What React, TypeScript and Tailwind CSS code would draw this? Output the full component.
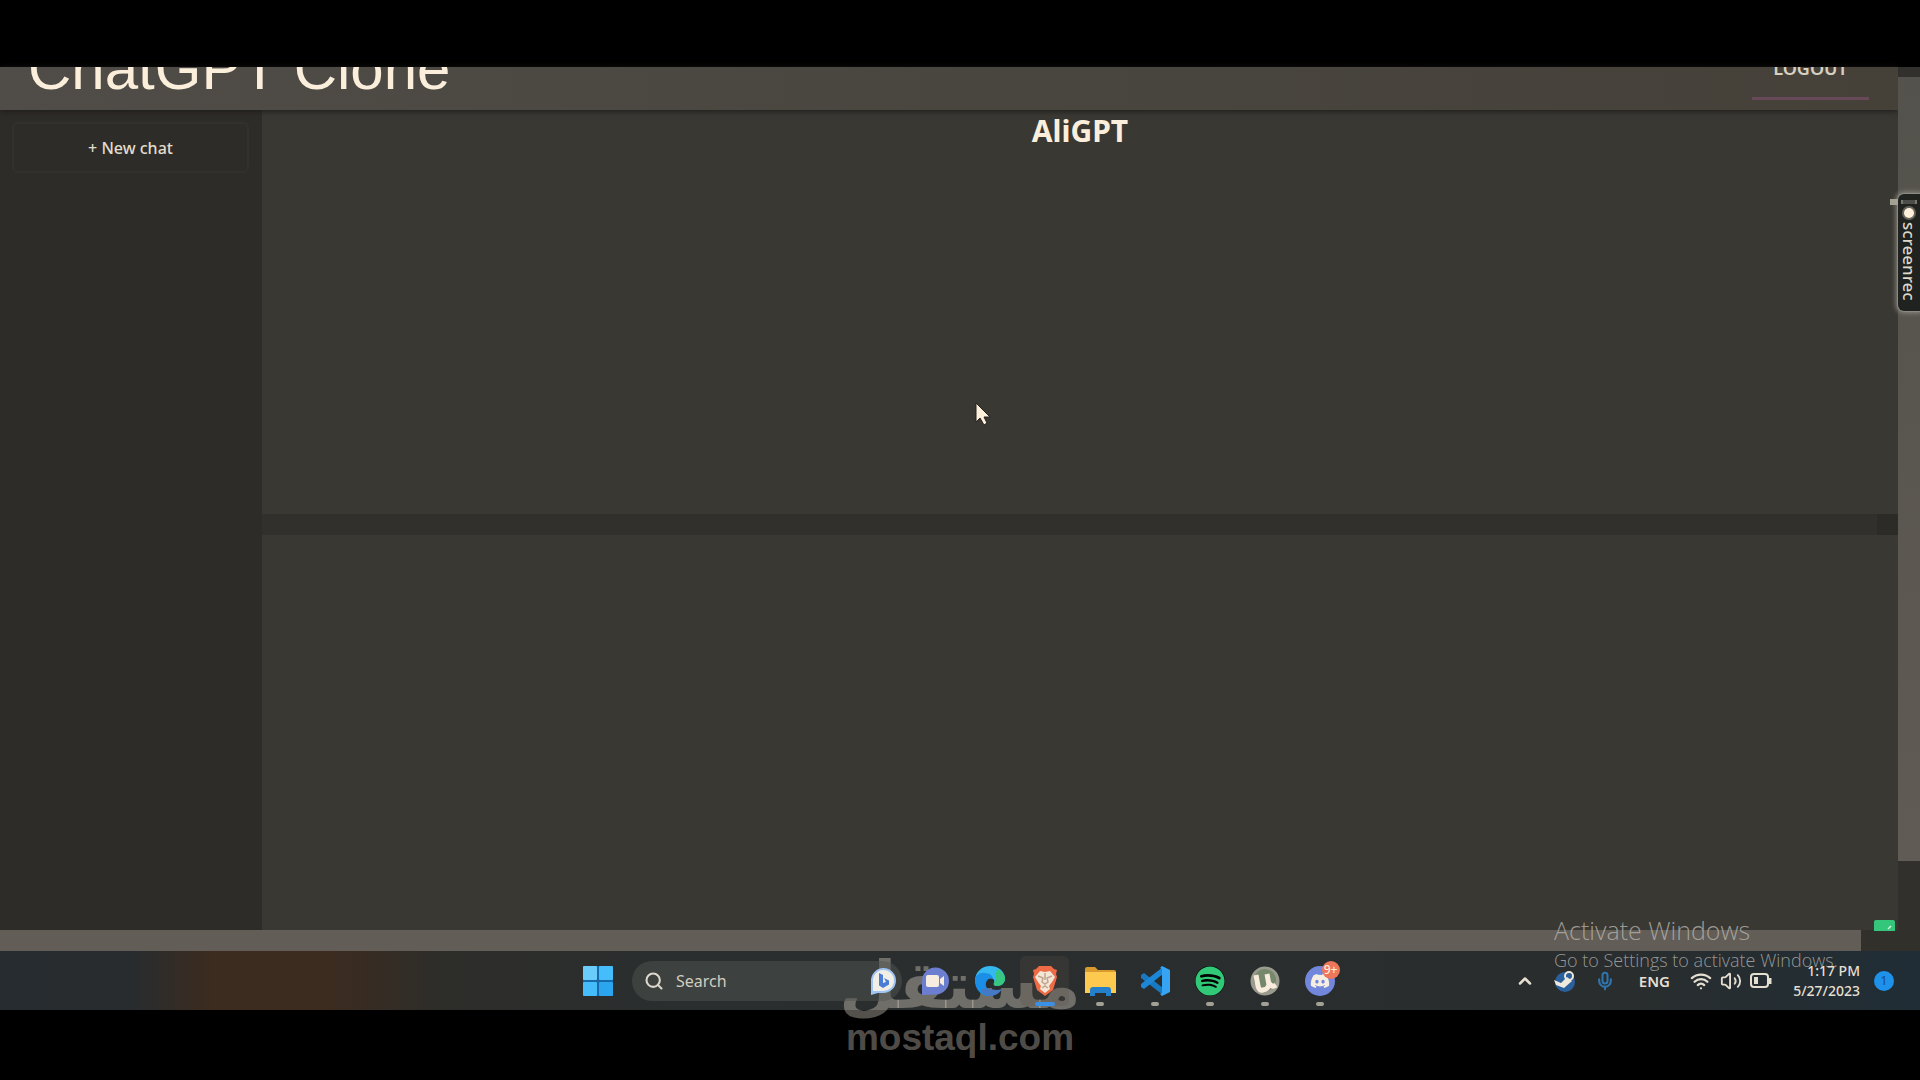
import type { ReactNode } from "react";
import { ChevronUp, Mic, Search, Volume2, Wifi } from "lucide-react";
import { FaDiscord, FaSpotify } from "react-icons/fa";

const font = "font-['Noto_Sans','Open_Sans',sans-serif]";

function Header() {
  return (
    <header className="relative z-10 flex h-[43px] shrink-0 items-end justify-between overflow-hidden bg-linear-to-r from-[#504c47] via-[#494640] to-[#454139] pl-7 pr-[29px] shadow-[0_1px_6px_#1c1b18]">
      <h1 className="pb-[11px] font-['Liberation_Sans',Arial,sans-serif] text-[60px] leading-[60px] text-[#fbefdc]">
        ChatGPT Clone
      </h1>
      <button
        type="button"
        className="mb-[10px] w-[117px] border-b-3 border-[#68495a] pb-[17px] text-center text-[18px] leading-6 font-semibold text-[#d6d0c1]"
      >
        LOGOUT
      </button>
    </header>
  );
}

function Sidebar() {
  return (
    <aside className="w-[262px] shrink-0 bg-[#2e2c28] px-3 pt-3">
      <button
        type="button"
        className="h-[51px] w-[237px] rounded-md border-2 border-[#33312d] text-[16px] leading-6 font-medium text-[#e2dccd]"
      >
        + New chat
      </button>
    </aside>
  );
}

function Chat() {
  return (
    <main className="flex min-w-0 flex-1 flex-col bg-[#3a3833]">
      <section className="h-[404px] shrink-0 text-center">
        <h2 className="text-[30px] leading-[42px] font-bold text-[#fbefdc]">
          AliGPT
        </h2>
      </section>
      <div className="flex h-[21px] shrink-0 justify-end bg-[#32302c]">
        <div className="w-[21px] bg-[#2d2b27]" />
      </div>
      <section className="flex-1" />
    </main>
  );
}

function Recorder() {
  return (
    <div className="absolute top-[194px] right-0 z-20 flex h-[117px] w-[22px] flex-col items-center rounded-l-md bg-[#20221f] shadow-[0_0_0_1px_#8b8981,0_0_5px_2px_#8b8981]">
      <span className="absolute top-[5px] -left-2 h-1.5 w-2 bg-[#a3a193]" />
      <span className="mt-1.5 h-1 w-4 border-x-2 border-dotted border-[#77786f] bg-[#4c4d48]" />
      <span className="mt-1 size-2.5 shrink-0 rounded-full bg-[#fff0dc] ring-2 ring-[#66635a]" />
      <span className="mt-1 text-[17px] leading-[18px] font-medium text-[#ddd8ca] [writing-mode:vertical-rl]">
        screenrec
      </span>
    </div>
  );
}

function WindowsLogo() {
  return (
    <svg viewBox="0 0 30 30" className="size-[30px]" fill="#45bdfb">
      <rect width="30" height="30" rx="2" fill="#1769a8" />
      <rect width="14" height="14" rx="1" fill="#6accfb" />
      <rect x="16" width="14" height="14" rx="1" />
      <rect y="16" width="14" height="14" rx="1" />
      <rect x="16" y="16" width="14" height="14" rx="1" fill="#2ca5ef" />
    </svg>
  );
}

function Bing() {
  return (
    <svg viewBox="0 0 30 30" className="size-[30px]">
      <path d="M3 29V15A12.500 12.500 0 1 1 15 27H10Z" fill="#9fc3f2" />
      <path d="M5 25V15A10.500 10.500 0 1 1 15 25Z" fill="#f1efe5" />
      <path d="M11 7l4 2v8l3-1-2-4 5 2.500v4L15 22l-4-2.500Z" fill="#4c7dd6" />
    </svg>
  );
}

function Chats() {
  return (
    <svg viewBox="0 0 30 30" className="size-[30px]">
      <path d="M2 29V15A13.500 13.500 0 1 1 16 28.500Z" fill="#6c7ed0" />
      <rect x="6" y="9" width="13" height="12" rx="2" fill="#f6ecdf" />
      <path d="M20 13l4-3v10l-4-3Z" fill="#f6ecdf" />
    </svg>
  );
}

function Edge() {
  return (
    <svg viewBox="0 0 30 30" className="size-[30px]">
      <path
        d="M0 15C0 6 7 0 15 0c9 0 15 6 15 12.500 0 5-4 7.500-8 7.500-3 0-4-1.500-3-3 1-2 0-5-4-5-6 0-9 5-9 9C2 20 0 18 0 15Z"
        fill="#35b8f0"
      />
      <path
        d="M22 3c5 2 8 6 8 9.500 0 5-4 7.500-8 7.500-3 0-4-1.500-3-3 2-4 1-8 3-14Z"
        fill="#37c781"
      />
      <path
        d="M0 15c0-6 5-9 10-8 5 0 8 3 8 6-4-2-8 2-7 7 1 4 6 7 12 6-2 3-6 4-9 4C6 30 0 23 0 15Z"
        fill="#1b8fe8"
      />
      <path d="M6 24c5-4 12 2 21-1-3 5-8 7-12 7-4 0-7-2-9-6Z" fill="#4579c4" />
    </svg>
  );
}

function Brave() {
  return (
    <svg viewBox="0 0 26 30" className="h-[30px] w-[26px]">
      <path
        d="M7 0h12l3 3 3 1-1 4 1 3-4 13-8 6-8-6L1 11l1-3-1-4 3-1Z"
        fill="#ee6b45"
      />
      <path
        d="M8 5l5 1 5-1 5 6-3 5-3 4 1 3-5 4-5-4 1-3-3-4-3-5Z"
        fill="#f2e6d6"
      />
      <path
        d="M6 10l5 2-1 4 3 2 3-2-1-4 5-2M10 22l3-2 3 2M13 7v7"
        fill="none"
        stroke="#c0a48e"
        strokeWidth="1.500"
      />
    </svg>
  );
}

function Folder() {
  return (
    <svg viewBox="0 0 32 30" className="h-[30px] w-8">
      <path d="M1 3q0-2 2-2h8l3 3h16q2 0 2 2v3H1Z" fill="#d99a2e" />
      <path d="M1 6h31v21H1Z" fill="#fdc94e" />
      <path d="M6 30v-6q0-3 3-3h15q3 0 3 3v6h-5v-3H11v3Z" fill="#2480ca" />
    </svg>
  );
}

function VsCode() {
  return (
    <svg viewBox="0 0 30 30" className="size-[30px]">
      <path d="M1 9l3-2 19 15v7L1 12Z" fill="#1878c0" />
      <path d="M1 21l3 2L23 8V1L1 18Z" fill="#1b87d6" />
      <path d="M22 0l8 4v22l-8 4-2-2 2-1V3l-2-1Z" fill="#36a4f2" />
    </svg>
  );
}

function Utorrent() {
  return (
    <svg viewBox="0 0 30 30" className="size-[30px]">
      <circle cx="15" cy="15" r="14.500" fill="#9a9b8e" />
      <circle cx="15" cy="14" r="11" fill="#75886b" />
      <path
        d="M6 9l2 11q1 5 5 4 5-1 6-5L17 8M19 17q3 5 7 2"
        fill="none"
        stroke="#faecdc"
        strokeWidth="5"
      />
    </svg>
  );
}

function Discord() {
  return (
    <span className="relative flex size-[30px] items-center justify-center rounded-full bg-[#7287dc]">
      <FaDiscord className="size-5 text-[#f7eee2]" />
      <span className="absolute -top-[5px] -right-[5px] flex size-[18px] items-center justify-center rounded-full bg-[#ee765a] text-[12px] leading-none font-medium text-[#fff0dc]">
        9+
      </span>
    </span>
  );
}

type App = { name: string; icon: ReactNode; state?: "open" | "active" };

const apps: App[] = [
  { name: "Chat", icon: <Chats /> },
  { name: "Edge", icon: <Edge /> },
  { name: "Brave", icon: <Brave />, state: "active" },
  { name: "File Explorer", icon: <Folder />, state: "open" },
  { name: "Visual Studio Code", icon: <VsCode />, state: "open" },
  {
    name: "Spotify",
    icon: (
      <span className="rounded-full bg-black">
        <FaSpotify className="size-[30px] text-[#31c978]" />
      </span>
    ),
    state: "open",
  },
  { name: "uTorrent", icon: <Utorrent />, state: "open" },
  { name: "Discord", icon: <Discord />, state: "open" },
];

function TaskbarApp({ name, icon, state }: App) {
  return (
    <button
      type="button"
      aria-label={name}
      className={`flex h-[50px] w-[49px] flex-col items-center rounded-md pt-[10px] ${
        state === "active" ? "bg-[#5b5048]/25" : ""
      }`}
    >
      {icon}
      {state === "active" && (
        <span className="mt-1.5 h-1 w-5 rounded-full bg-[#3a8fe6]" />
      )}
      {state === "open" && (
        <span className="mt-1.5 h-1 w-2 rounded-full bg-[#a3a195]" />
      )}
    </button>
  );
}

function Tray() {
  return (
    <div className="relative z-10 flex items-center text-[#e5dfd1]">
      <button type="button" aria-label="Show hidden icons">
        <ChevronUp className="size-5" strokeWidth={3} />
      </button>
      <svg viewBox="0 0 22 22" className="ml-[19px] size-[22px]">
        <circle cx="11" cy="12" r="10" fill="#2a609c" />
        <circle cx="15" cy="6" r="4" fill="none" stroke="#efe8dc" strokeWidth="2" />
        <path d="M0 10l7 3 6-6 5 4-8 7-8-3Z" fill="#efe8dc" />
      </svg>
      <Mic className="ml-[19px] size-5 text-[#3173ad]" strokeWidth={2.5} />
      <span className="ml-6 text-[15px] leading-5 font-semibold">ENG</span>
      <Wifi className="ml-5 size-[22px]" strokeWidth={2.5} />
      <Volume2 className="ml-2 size-[22px]" />
      <svg viewBox="0 0 22 16" className="ml-2 h-4 w-[22px]" fill="none">
        <rect x="1" y="1" width="17" height="13" rx="3" stroke="#e5dfd1" strokeWidth="2" />
        <rect x="4" y="4" width="4" height="7" fill="#e5dfd1" />
        <path d="M20 5v6" stroke="#e5dfd1" strokeWidth="3" />
      </svg>
      <div className="ml-[18px] w-[70px] text-right text-[14px] leading-5 font-medium whitespace-nowrap">
        <p>1:17 PM</p>
        <p>5/27/2023</p>
      </div>
      <button
        type="button"
        className="ml-[14px] flex size-5 items-center justify-center rounded-full bg-[#1e92eb] text-[12px] text-[#154c7c]"
      >
        1
      </button>
    </div>
  );
}

function Taskbar() {
  return (
    <footer className="flex h-[59px] shrink-0 items-center justify-between bg-[linear-gradient(90deg,#272c30_0%,#282c2e_7%,#3c2b1f_11%,#3c2b1f_17%,#2d2d2a_23%,#2a2e2e_35%,#292d2e_85%,#202d36_100%)] pr-[26px] pl-[583px]">
      <div className="relative z-10 flex items-center">
        <button type="button" aria-label="Start">
          <WindowsLogo />
        </button>
        <label className="ml-[19px] flex h-10 w-[270px] items-center rounded-full bg-[#50534f]/50 pr-1 pl-3 text-[#dcd8cd]">
          <Search className="size-5" strokeWidth={2.5} />
          <input
            type="text"
            aria-label="Search"
            placeholder="Search"
            className="ml-3 w-0 flex-1 text-[16px] leading-6 placeholder:text-[#d2cdbf]"
          />
          <Bing />
        </label>
        <div className="ml-2 flex gap-1.5">
          {apps.map((app) => (
            <TaskbarApp key={app.name} {...app} />
          ))}
        </div>
      </div>
      <Tray />
    </footer>
  );
}

function Pointer() {
  return (
    <svg viewBox="0 0 16 24" className="absolute top-[402px] left-[975px] h-6 w-4">
      <path
        d="M1 1v19l4-4 4 7 3-2-3-6h6Z"
        fill="#fff0dc"
        stroke="#25231f"
        strokeWidth="1"
      />
    </svg>
  );
}

export default function App() {
  return (
    <div className={`relative flex h-screen flex-col overflow-hidden bg-black pt-[67px] pb-[70px] ${font}`}>
      <div className="flex min-h-0 flex-1">
        <div className="flex min-w-0 flex-1 flex-col">
          <Header />
          <div className="flex min-h-0 flex-1">
            <Sidebar />
            <Chat />
          </div>
        </div>
        <div className="relative z-10 flex w-[22px] shrink-0 flex-col bg-[#31302c] pt-[10px]">
          <div className="h-[784px] bg-linear-to-b from-[#54524c] to-[#605b54]" />
        </div>
      </div>
      <div className="flex h-[21px] shrink-0 bg-[#31302b] pr-[59px]">
        <div className="flex-1 bg-[#625d56]" />
      </div>
      <Taskbar />

      <Pointer />
      <Recorder />
      <svg viewBox="0 0 21 11" className="absolute right-[25px] bottom-[149px] h-[11px] w-[21px]">
        <path d="M0 2q0-2 2-2h17q2 0 2 2v9H0Z" fill="#34c77b" />
        <path d="M14 9l3-3" stroke="#d9f3e2" strokeWidth="1.500" />
      </svg>
      <div className="absolute right-[85px] bottom-[106px] w-[281px] font-['Open_Sans','Noto_Sans',sans-serif] whitespace-nowrap text-[#b5b3ad]/80">
        <p className="text-[25px] leading-8 font-light">Activate Windows</p>
        <p className="text-[18px] leading-7 font-light">Go to Settings to activate Windows.</p>
      </div>
      <div className="absolute bottom-[20px] left-[845px] flex w-[230px] flex-col items-center text-[#fff2e4]/33">
        <p lang="ar" dir="rtl" className="font-['DejaVu_Sans',sans-serif] text-[66px] leading-[60px] font-bold">
          مستقل
        </p>
        <p className="font-['Liberation_Sans',Arial,sans-serif] text-[37px] leading-[44px] font-bold">
          mostaql.com
        </p>
      </div>
    </div>
  );
}
